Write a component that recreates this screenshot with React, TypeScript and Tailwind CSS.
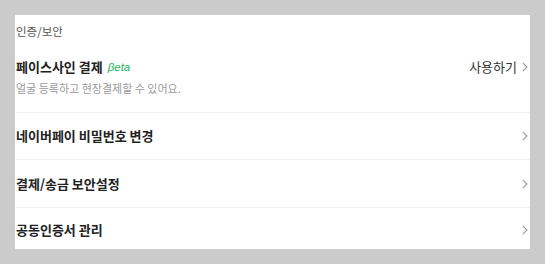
import React from "react";

const Chevron = () => (
  <svg width="6" height="10" viewBox="0 0 6 10" className="shrink-0">
    <polyline points="0.8,0.8 5,5 0.8,9.2" fill="none" stroke="#9a9a9a" strokeWidth="1.1" />
  </svg>
);

const Row = ({ label, h }: { label: string; h: string }) => (
  <div className={`flex items-center justify-between border-t border-[#f1f1f1] pr-[2px] ${h}`}>
    <span className="text-[13px] font-bold leading-[18px] text-[#222]">{label}</span>
    <Chevron />
  </div>
);

export default function App() {
  return (
    <div
      className="relative h-[264px] w-[545px] overflow-hidden bg-[#cbcbcb] px-[15px] pt-[15px]"
      style={{ fontFamily: '"Noto Sans CJK KR", "Noto Sans", sans-serif' }}
    >
      <div className="h-[234px] overflow-hidden bg-white pl-[1px]">
        <div className="pt-[8px] text-[11.5px] leading-[16px] text-[#555]">인증/보안</div>
        <div className="mt-[19px] flex items-center justify-between pr-[2px]">
          <div className="flex items-center gap-[5px]">
            <span className="text-[13px] font-bold leading-[18px] text-[#222]">페이스사인 결제</span>
            <span
              className="text-[11.5px] italic leading-[18px] text-[#1db55a]"
              style={{ fontFamily: '"Liberation Sans", sans-serif' }}
            >
              βeta
            </span>
          </div>
          <div className="flex items-center gap-[5px]">
            <span className="text-[13px] leading-[18px] text-[#333]">사용하기</span>
            <Chevron />
          </div>
        </div>
        <div className="mt-[4px] pb-[16px] text-[11px] leading-[16px] text-[#9a9a9a]">
          얼굴 등록하고 현장결제할 수 있어요.
        </div>
        <Row label="네이버페이 비밀번호 변경" h="h-[47px]" />
        <Row label="결제/송금 보안설정" h="h-[48px]" />
        <Row label="공동인증서 관리" h="h-[44px]" />
      </div>
    </div>
  );
}
